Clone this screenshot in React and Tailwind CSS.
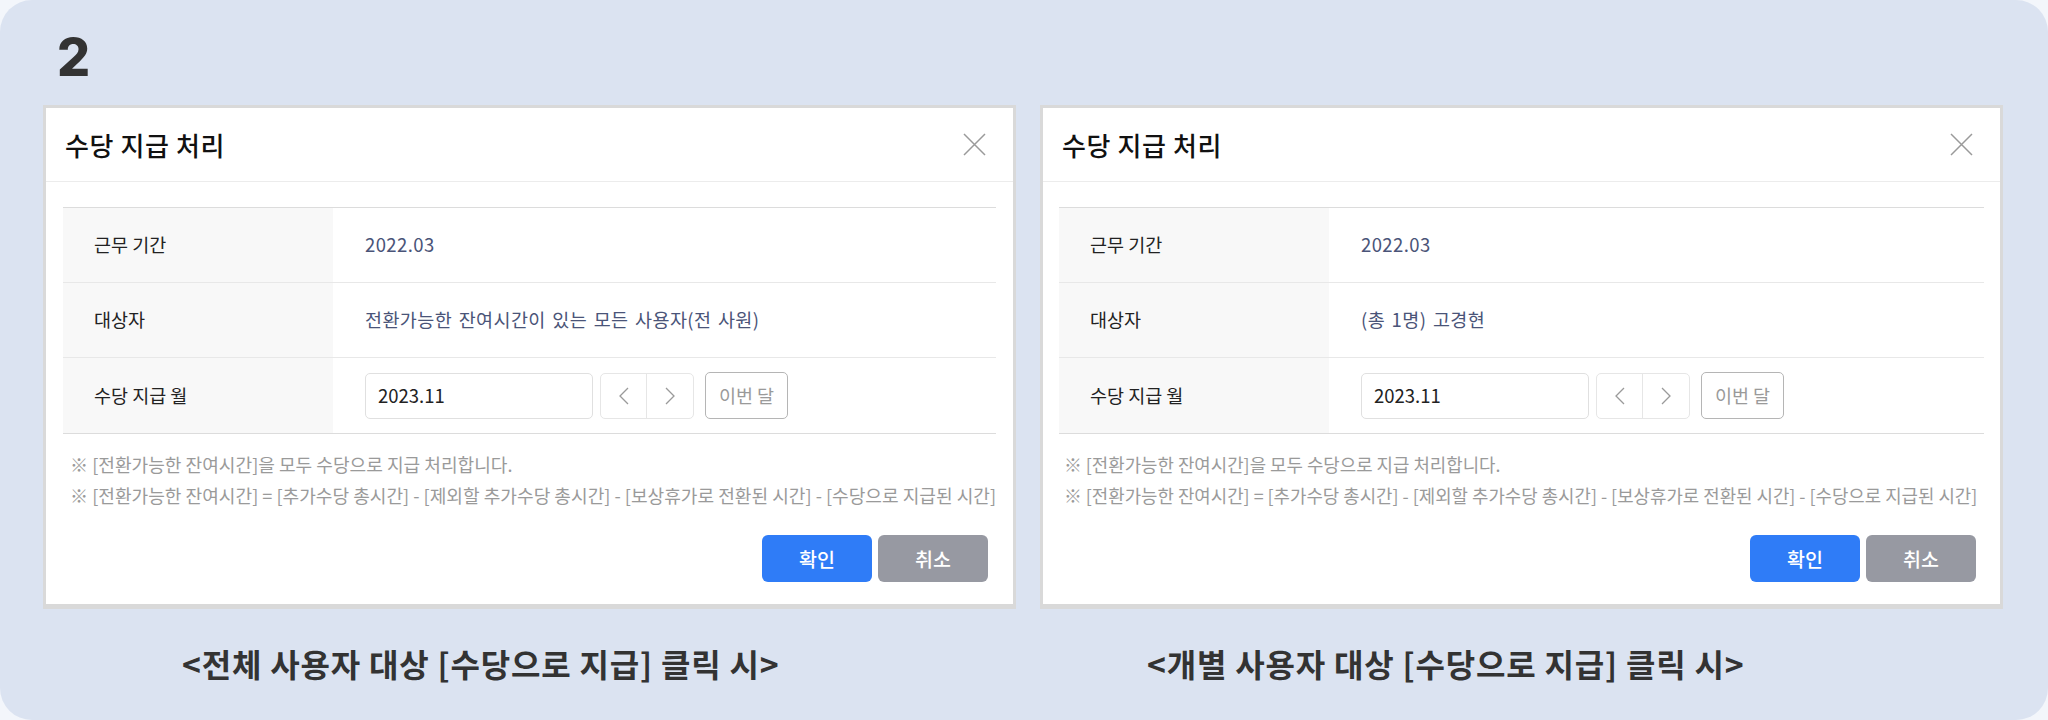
import React from "react";

const KR = { fontFamily: '"Noto Sans CJK KR", "Noto Sans", sans-serif' };

function CloseIcon() {
  return (
    <svg width="23" height="23" viewBox="0 0 23 23" fill="none">
      <path d="M1 1L22 22M22 1L1 22" stroke="#9a9a9a" strokeWidth="1.5" />
    </svg>
  );
}

function Chevron({ dir }) {
  return (
    <svg width="10" height="18" viewBox="0 0 10 18" fill="none">
      {dir === "left" ? (
        <path d="M9 1L1 9L9 17" stroke="#9a9a9a" strokeWidth="1.3" />
      ) : (
        <path d="M1 1L9 9L1 17" stroke="#9a9a9a" strokeWidth="1.3" />
      )}
    </svg>
  );
}

function Row({ label, children, last }) {
  return (
    <div className={"flex h-[75px] " + (last ? "" : "border-b border-[#e8e8e8]")}>
      <div className="w-[270px] shrink-0 bg-[#f8f8f8] flex items-center pl-[31px] text-[18.5px] text-[#222]">
        {label}
      </div>
      <div className="flex-1 flex items-center pl-[32px] text-[18.5px] text-[#4a5478] tracking-[0.4px] [word-spacing:2px]">
        {children}
      </div>
    </div>
  );
}

function Dialog({ wide, target }) {
  return (
    <div
      className={
        "bg-white border-[3px] border-b-[5px] border-[#d9d9d9] flex flex-col " +
        (wide ? "w-[973px]" : "w-[963px]")
      }
      style={KR}
    >
      <div className="h-[74px] flex items-center justify-between pl-[19px] pr-[27px] border-b border-[#ececec]">
        <div className="text-[26px] font-medium text-[#111] tracking-[0.6px]">수당 지급 처리</div>
        <CloseIcon />
      </div>
      <div className={"pt-[25px] pb-[22px] " + (wide ? "px-[17px]" : "px-[16px]")}>
        <div className="border-t border-b border-[#dcdcdc]">
          <Row label="근무 기간">2022.03</Row>
          <Row label="대상자">{target}</Row>
          <Row label="수당 지급 월" last>
            <div className="flex items-center tracking-normal [word-spacing:0px]">
              <div className="w-[228px] h-[46px] border border-[#e0e0e0] rounded-[5px] flex items-center pl-[12px] text-[18.5px] text-[#222]">
                2023.11
              </div>
              <div className="ml-[7px] flex h-[46px] border border-[#e6e6e6] rounded-[5px]">
                <div className="w-[46px] flex items-center justify-center border-r border-[#e6e6e6]">
                  <Chevron dir="left" />
                </div>
                <div className="w-[46px] flex items-center justify-center">
                  <Chevron dir="right" />
                </div>
              </div>
              <div className="ml-[11px] w-[83px] h-[47px] border border-[#b5b5b5] rounded-[5px] flex items-center justify-center text-[18.5px] text-[#9a9a9a]">
                이번 달
              </div>
            </div>
          </Row>
        </div>
        <div
          className={
            "pt-[15px] leading-[31px] text-[#9a9a9a] whitespace-nowrap " +
            (wide ? "pl-[7px] text-[18.1px]" : "pl-[5px] text-[17.85px]")
          }
        >
          <div>※ [전환가능한 잔여시간]을 모두 수당으로 지급 처리합니다.</div>
          <div>
            ※ [전환가능한 잔여시간] = [추가수당 총시간] - [제외할 추가수당 총시간] - [보상휴가로 전환된 시간] - [수당으로 지급된 시간]
          </div>
        </div>
        <div className="mt-[24px] flex justify-end gap-[6px] pr-[8px]">
          <button className="w-[110px] h-[47px] rounded-[6px] bg-[#2f7cf7] text-white text-[19.5px] font-medium">
            확인
          </button>
          <button className="w-[110px] h-[47px] rounded-[6px] bg-[#9799a2] text-white text-[19.5px] font-medium">
            취소
          </button>
        </div>
      </div>
    </div>
  );
}

export default function App() {
  return (
    <div className="w-[2048px] h-[720px] bg-[#f3f6fb]">
      <div className="w-full h-full rounded-[32px] bg-[#dbe3f1] overflow-hidden">
        <div
          className="h-[105px] pt-[32px] pl-[57px] text-[52px] leading-[52px] font-extrabold text-[#333]"
          style={{ fontFamily: 'Inter, "Noto Sans", sans-serif' }}
        >
          2
        </div>
        <div className="flex gap-[24px] pl-[43px]">
          <div className="flex flex-col">
            <Dialog wide target="전환가능한 잔여시간이 있는 모든 사용자(전 사원)" />
            <div
              className="mt-[34px] pl-[139px] text-[32px] leading-[40px] font-bold text-[#333] tracking-[0.8px]"
              style={KR}
            >
              &lt;전체 사용자 대상 [수당으로 지급] 클릭 시&gt;
            </div>
          </div>
          <div className="flex flex-col">
            <Dialog target="(총 1명) 고경현" />
            <div
              className="mt-[34px] pl-[107px] text-[32px] leading-[40px] font-bold text-[#333] tracking-[0.8px]"
              style={KR}
            >
              &lt;개별 사용자 대상 [수당으로 지급] 클릭 시&gt;
            </div>
          </div>
        </div>
      </div>
    </div>
  );
}
